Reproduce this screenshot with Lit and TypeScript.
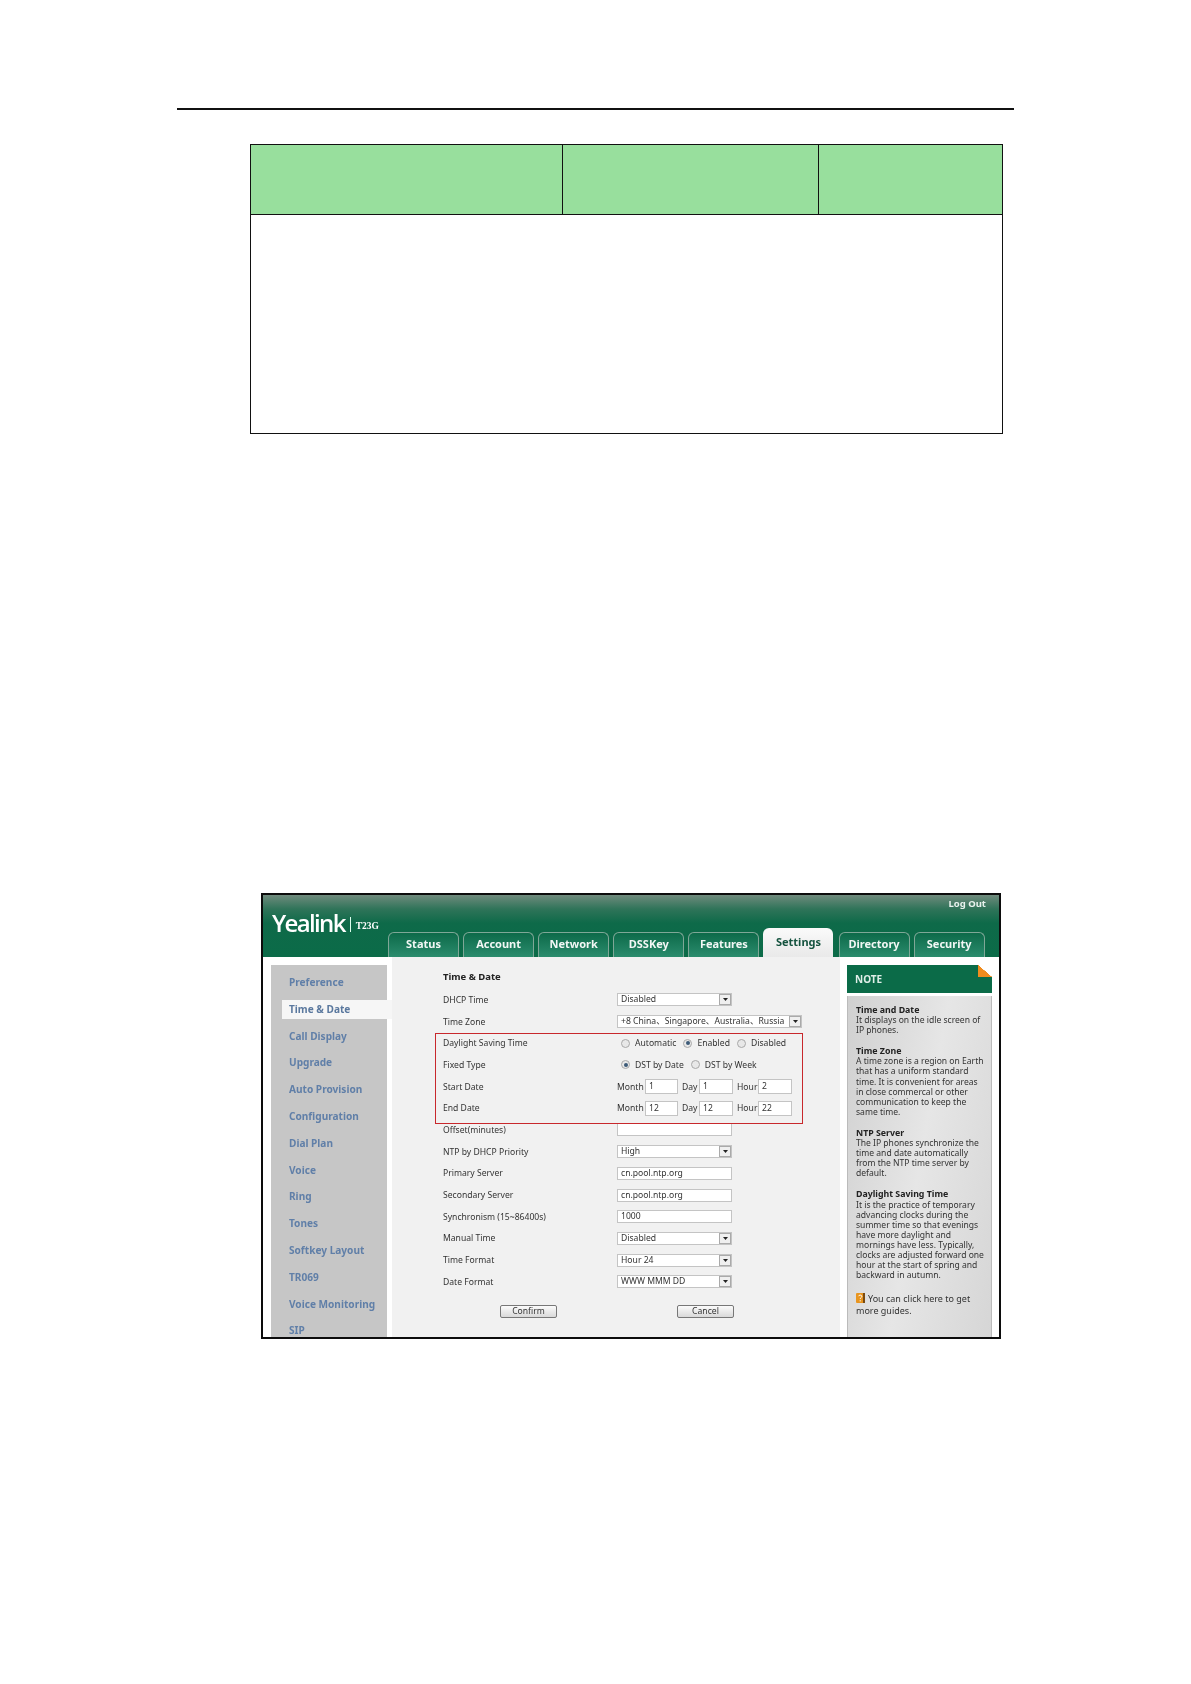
import { LitElement, html, css, nothing } from "lit";
import { customElement } from "lit/decorators.js";

const TABS = ["Status", "Account", "Network", "DSSKey", "Features", "Settings", "Directory", "Security"];
const SIDE = ["Preference", "Time & Date", "Call Display", "Upgrade", "Auto Provision", "Configuration", "Dial Plan", "Voice", "Ring", "Tones", "Softkey Layout", "TR069", "Voice Monitoring", "SIP"];

type Row = { label: string; kind: string; value?: string; wide?: boolean };
const ROWS: Row[] = [
  { label: "DHCP Time", kind: "select", value: "Disabled" },
  { label: "Time Zone", kind: "select", value: "+8 China、Singapore、Australia、Russia", wide: true },
  { label: "Daylight Saving Time", kind: "dst" },
  { label: "Fixed Type", kind: "fixed" },
  { label: "Start Date", kind: "date", value: "1,1,2" },
  { label: "End Date", kind: "date", value: "12,12,22" },
  { label: "Offset(minutes)", kind: "input", value: "" },
  { label: "NTP by DHCP Priority", kind: "select", value: "High" },
  { label: "Primary Server", kind: "input", value: "cn.pool.ntp.org" },
  { label: "Secondary Server", kind: "input", value: "cn.pool.ntp.org" },
  { label: "Synchronism (15~86400s)", kind: "input", value: "1000" },
  { label: "Manual Time", kind: "select", value: "Disabled" },
  { label: "Time Format", kind: "select", value: "Hour 24" },
  { label: "Date Format", kind: "select", value: "WWW MMM DD" },
];

const NOTES = [
  ["Time and Date", ["It displays on the idle screen of", "IP phones."]],
  ["Time Zone", ["A time zone is a region on Earth", "that has a uniform standard", "time. It is convenient for areas", "in close commercal or other", "communication to keep the", "same time."]],
  ["NTP Server", ["The IP phones synchronize the", "time and date automatically", "from the NTP time server by", "default."]],
  ["Daylight Saving Time", ["It is the practice of temporary", "advancing clocks during the", "summer time so that evenings", "have more daylight and", "mornings have less. Typically,", "clocks are adjusted forward one", "hour at the start of spring and", "backward in autumn."]],
] as [string, string[]][];

@customElement("app-root")
export class AppRoot extends LitElement {
  static styles = css`
    :host { display: block; width: 1191px; height: 1684px; background: #fff; overflow: hidden; font-family: "Liberation Sans", Arial, sans-serif; }
    .page { padding: 108px 0 0 0; }
    .rule { margin-left: 177px; width: 837px; height: 2px; background: #111; }
    .table { margin: 34px 0 0 250px; width: 753px; height: 290px; box-sizing: border-box; border: 1.5px solid #111; display: flex; flex-direction: column; }
    .thead { height: 69px; display: grid; grid-template-columns: 311px 256px 1fr; border-bottom: 1.5px solid #111; flex: none; }
    .thead div { background: #98df9d; border-left: 1.5px solid #111; }
    .thead div:first-child { border-left: 0; }
    .shot { margin: 459px 0 0 261px; width: 740px; height: 446px; box-sizing: border-box; border: 2px solid #0c0c0c; background: #fff; overflow: hidden; display: flex; flex-direction: column; position: relative; filter: blur(0.3px); }
    .head { height: 62px; flex: none; background: linear-gradient(#6f8a7c 0, #2f7459 14px, #0e6a49 28px, #0b6b48 100%); position: relative; display: flex; align-items: flex-end; padding-left: 125px; gap: 4.1px; }
    .logo { position: absolute; left: 9px; top: 14px; display: flex; align-items: center; color: #fff; }
    .logo .name { font: 600 24px/28px "Open Sans", sans-serif; letter-spacing: -1.65px; }
    .logo .sep { width: 1px; height: 15px; background: #dfe; margin: 3px 5px 0 5px; }
    .logo .model { font: 700 9.5px/10px "Liberation Serif", serif; margin-top: 5px; }
    .logout { position: absolute; right: 13px; top: 2px; color: #e9f2ee; font: 700 9.5px/14px "Noto Sans", sans-serif; }
    .tab { width: 71px; height: 25px; box-sizing: border-box; border: 1px solid #7fa797; border-bottom: 0; border-radius: 6px 6px 0 0; background: linear-gradient(#0d6a49, #2b8c6d); color: #f2f7f5; font: 700 11px/22px "Noto Sans", sans-serif; text-align: center; }
    .tab.on { height: 29px; width: 70px; margin-right: 1px; background: linear-gradient(#fafafa, #e9e9e9); border: 0; color: #15533f; line-height: 27px; }
    .body { flex: 1; display: flex; min-height: 0; background: #fff; }
    .side { width: 121px; margin-left: 8px; padding-top: 8px; flex: none; }
    .side-in { width: 116px; background: #c6c6c6; padding-top: 4px; height: 380px; }
    .sitem { height: 26.8px; font: 700 10.1px/26px "Noto Sans", sans-serif; color: #607fa8; padding-left: 18px; box-sizing: border-box; white-space: nowrap; }
    .sitem.on { background: #f6f6f6; margin-left: 11px; width: 110px; padding-left: 7px; height: 19px; line-height: 19px; margin-top: 4px; margin-bottom: 3.8px; color: #5a789e; }
    .main { width: 448px; background: #f1f1f1; flex: none; padding: 9px 0 0 51px; box-sizing: border-box; position: relative; }
    .title { height: 23px; font: 700 9.5px/22px "Noto Sans", sans-serif; color: #222; }
    .row { height: 21.7px; display: grid; grid-template-columns: 174px 1fr; align-items: center; font: 400 8.6px/12px "Noto Sans", "Noto Sans CJK SC", sans-serif; color: #333; }
    .val { display: flex; align-items: center; white-space: nowrap; }
    .dates { display: grid; grid-template-columns: 28px 33px 21px 34px 25px 34px; align-items: center; white-space: nowrap; }
    .dates .lab { padding-left: 4px; }
    .dates .lab:first-child { padding-left: 0; }
    .select, .input { box-sizing: border-box; width: 115px; height: 13px; background: #fff; border: 1px solid #c4c4c4; padding-left: 3px; line-height: 11px; position: relative; overflow: hidden; white-space: nowrap; }
    .select.wide { width: 185px; }
    .arrow { position: absolute; right: 0; top: 0; width: 12px; height: 11px; background: #efefef; border: 1px solid #aaa; box-sizing: border-box; display: flex; align-items: center; justify-content: center; }
    .arrow svg { display: block; }
    .radio { width: 9px; height: 9px; border-radius: 50%; border: 1px solid #a9a9a9; background: #e8e8e8; box-sizing: border-box; flex: none; margin-left: 4px; margin-right: 5px; position: relative; }
    .radio.on::after { content: ""; position: absolute; inset: 1.5px; background: #3c5a78; border-radius: 50%; }
    .radio.next { margin-left: 7px; }
    .date { height: 15px; box-sizing: border-box; border: 1px solid #c4c4c4; background: #fff; padding-left: 3px; line-height: 13px; }
    .buttons { padding-top: 12.5px; display: flex; }
    .btn { width: 57px; height: 13px; box-sizing: border-box; border: 1px solid #777; border-radius: 2px; background: linear-gradient(#fbfbfb, #d9d9d9); font: 400 8.6px/11px "Noto Sans", sans-serif; color: #333; text-align: center; }
    .btn.confirm { margin-left: 57px; }
    .btn.cancel { margin-left: 120px; }
    .red { position: absolute; left: 43px; top: 76px; width: 368px; height: 91px; border: 1px solid #c8282c; box-sizing: border-box; pointer-events: none; }
    .notepane { width: 145px; margin-left: 7px; padding-top: 8px; flex: none; display: flex; flex-direction: column; }
    .nhead { height: 28px; background: #0b6b48; color: #dfeee8; font: 700 10px/28px "Noto Sans", sans-serif; padding-left: 8px; position: relative; }
    .corner { position: absolute; right: 0; top: 0; width: 14px; height: 12px; background: linear-gradient(to bottom left, #fff 49%, #f08c1e 50%); }
    .nbody { flex: 1; margin-top: 3px; background: linear-gradient(100deg, #d0d0d0, #e6e6e6 50%, #d6d6d6); border-left: 1px solid #bbb; border-right: 1px solid #bbb; padding: 9px 0 0 8px; font: 400 8.55px/10.1px "Noto Sans", sans-serif; color: #333; white-space: nowrap; }
    .nbody b { color: #222; display: block; font-size: 8.8px; }
    .nblock { margin-bottom: 11px; }
    .guide { margin-top: 13px; line-height: 12px; font-size: 9px; }
    .qicon { display: inline-block; vertical-align: -1px; margin-right: 3px; }
  `;

  private radio(on: boolean, text: string, next = false) {
    return html`<span class="radio ${on ? "on" : ""} ${next ? "next" : ""}"></span><span>${text}</span>`;
  }

  private value(r: Row) {
    if (r.kind === "select") {
      return html`<div class="select ${r.wide ? "wide" : ""}">${r.value}<span class="arrow"><svg width="5" height="3" viewBox="0 0 5 3"><path d="M0 0h5L2.500 3z" fill="#222"/></svg></span></div>`;
    }
    if (r.kind === "input") return html`<div class="input">${r.value}</div>`;
    if (r.kind === "dst") return html`<div class="val">${this.radio(false, "Automatic")}${this.radio(true, "Enabled", true)}${this.radio(false, "Disabled", true)}</div>`;
    if (r.kind === "fixed") return html`<div class="val">${this.radio(true, "DST by Date")}${this.radio(false, "DST by Week", true)}</div>`;
    const [m, d, h] = (r.value ?? "").split(",");
    return html`<div class="dates"><span class="lab">Month</span><span class="date">${m}</span><span class="lab">Day</span><span class="date">${d}</span><span class="lab">Hour</span><span class="date">${h}</span></div>`;
  }

  render() {
    return html`
      <div class="page">
        <div class="rule"></div>
        <div class="table">
          <div class="thead"><div></div><div></div><div></div></div>
        </div>
        <div class="shot">
          <div class="head">
            <div class="logo"><span class="name">Yealink</span><span class="sep"></span><span class="model">T23G</span></div>
            <div class="logout">Log Out</div>
            ${TABS.map((t) => html`<div class="tab ${t === "Settings" ? "on" : ""}">${t}</div>`)}
          </div>
          <div class="body">
            <div class="side"><div class="side-in">
              ${SIDE.map((s) => html`<div class="sitem ${s === "Time & Date" ? "on" : ""}">${s}</div>`)}
            </div></div>
            <div class="main">
              <div class="title">Time &amp; Date</div>
              ${ROWS.map((r) => html`<div class="row"><span>${r.label}</span>${this.value(r)}</div>`)}
              <div class="buttons"><div class="btn confirm">Confirm</div><div class="btn cancel">Cancel</div></div>
              <div class="red"></div>
            </div>
            <div class="notepane">
              <div class="nhead">NOTE<span class="corner"></span></div>
              <div class="nbody">
                ${NOTES.map(([t, ls]) => html`<div class="nblock"><b>${t}</b>${ls.map((l, i) => html`${i ? html`<br />` : nothing}${l}`)}</div>`)}
                <div class="guide"><svg class="qicon" width="9" height="10" viewBox="0 0 9 10"><rect width="9" height="10" rx="1" fill="#e8951f"/><rect x="7" width="2" height="10" fill="#7a4a10"/><path d="M2.500 3.200C3 1.600 6 1.800 5.800 3.500 5.700 4.700 4.200 4.600 4.200 6M4.200 7.200v1.200" stroke="#fff" fill="none"/></svg>You can click here to get<br />more guides.</div>
              </div>
            </div>
          </div>
        </div>
      </div>
    `;
  }
}
